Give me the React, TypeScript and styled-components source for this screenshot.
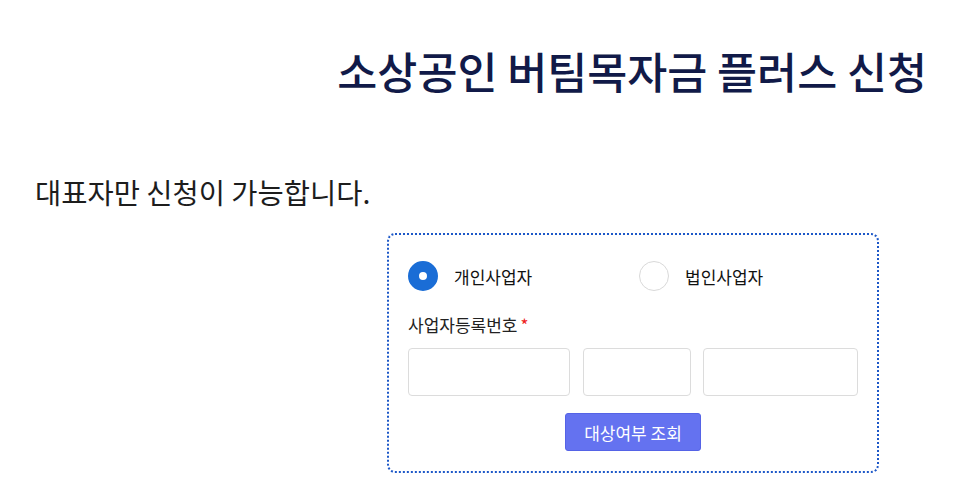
import styled, { createGlobalStyle } from "styled-components";

const GlobalStyle = createGlobalStyle`
	body {
		margin: 0;
		background: #fff;
		font-family: "Noto Sans CJK KR", "Noto Sans", sans-serif;
	}
`;

const App = () => {
	return (
		<Page>
			<GlobalStyle />
			<Title>소상공인 버팀목자금 플러스 신청</Title>
			<Notice>대표자만 신청이 가능합니다.</Notice>
			<FormBox>
				<RadioRow>
					<RadioItem>
						<RadioMark checked />
						<RadioLabel>개인사업자</RadioLabel>
					</RadioItem>
					<RadioItem>
						<RadioMark />
						<RadioLabel>법인사업자</RadioLabel>
					</RadioItem>
				</RadioRow>
				<FieldLabel>
					사업자등록번호<Required>*</Required>
				</FieldLabel>
				<InputRow>
					<NumberInput width={162} />
					<NumberInput width={108} />
					<NumberInput width={155} />
				</InputRow>
				<ButtonRow>
					<SearchButton>대상여부 조회</SearchButton>
				</ButtonRow>
			</FormBox>
		</Page>
	);
};
export default App;

// =============================================================================
// Styled Components
// =============================================================================
const Page = styled.div`
	width: 969px;
	height: 491px;
	overflow: hidden;
`;

const Title = styled.h1`
	margin: 0;
	padding: 41px 42px 0 0;
	text-align: right;
	font-size: 43.5px;
	font-weight: 500;
	line-height: 60px;
	color: #111a48;
`;

const Notice = styled.p`
	margin: 0;
	padding: 72px 0 0 35px;
	font-size: 28.5px;
	line-height: 38px;
	color: #1d1d1d;
`;

const FormBox = styled.div`
	box-sizing: border-box;
	width: 492px;
	height: 240px;
	margin: 22px 0 0 387px;
	padding: 25px 19px 0 19px;
	border: 2px dotted #1d58c8;
	border-radius: 8px;
`;

const RadioRow = styled.div`
	display: flex;
	align-items: center;
	height: 32px;
`;

const RadioItem = styled.label`
	display: flex;
	flex-shrink: 0;
	align-items: center;
	width: 231px;
	gap: 16px;
`;

const RadioMark = styled.span<{ checked?: boolean }>`
	box-sizing: border-box;
	width: 30px;
	height: 30px;
	border-radius: 50%;
	background: #fff;
	border: ${(p) => (p.checked ? "11px solid #1a6dd6" : "1px solid #d9d9d9")};
`;

const RadioLabel = styled.span`
	font-size: 17px;
	color: #111;
`;

const FieldLabel = styled.div`
	margin-top: 21px;
	font-size: 17px;
	line-height: 24px;
	color: #222;
`;

const Required = styled.span`
	color: #ee1c1c;
	margin-left: 3px;
`;

const InputRow = styled.div`
	display: flex;
	gap: 12.5px;
	margin-top: 11px;
`;

const NumberInput = styled.input<{ width: number }>`
	box-sizing: border-box;
	width: ${(p) => p.width}px;
	height: 48px;
	border: 1px solid #dcdcdc;
	border-radius: 4px;
	background: #fff;
	outline: none;
`;

const ButtonRow = styled.div`
	display: flex;
	justify-content: center;
	margin-top: 17px;
`;

const SearchButton = styled.button`
	width: 136px;
	height: 38px;
	border: 1px solid #5563e6;
	border-radius: 3px;
	background: #6472f0;
	color: #fff;
	font-family: "Noto Sans CJK KR", sans-serif;
	font-size: 17px;
	padding: 0;
`;
